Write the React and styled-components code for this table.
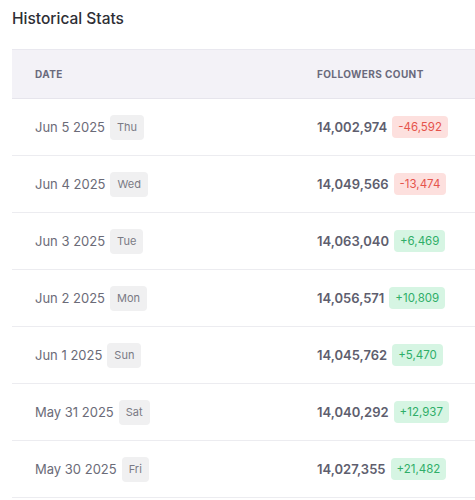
import styled, { createGlobalStyle } from 'styled-components';

const GlobalStyle = createGlobalStyle`
  body {
    margin: 0;
    background: #ffffff;
    font-family: Inter, "Noto Sans", sans-serif;
    overflow: hidden;
  }
`;

const Page = styled.div`
  padding: 8px 0 0 12px;
`;

const Title = styled.h2`
  margin: 0 0 19px;
  font-size: 15.5px;
  line-height: 22px;
  font-weight: 500;
  color: #2e2e35;
`;

const Table = styled.div`
  width: 560px;
`;

const HeaderRow = styled.div`
  display: grid;
  grid-template-columns: 282px 1fr;
  align-items: center;
  height: 48px;
  background: #f3f2f7;
  border-top: 1px solid #e9e8ef;
  border-bottom: 1px solid #e6e5ec;
`;

const HeaderCell = styled.div`
  padding-left: 23px;
  font-size: 10px;
  font-weight: 700;
  letter-spacing: 0.4px;
  text-transform: uppercase;
  color: #6a6a7c;
`;

const Row = styled.div`
  display: grid;
  grid-template-columns: 282px 1fr;
  align-items: center;
  height: 56px;
  border-bottom: 1px solid #ececf0;
`;

const Cell = styled.div`
  display: flex;
  align-items: center;
  gap: 5px;
  padding-left: 23px;
`;

const DateText = styled.span`
  font-size: 13px;
  color: #6b6b78;
`;

const DayTag = styled.span`
  display: inline-flex;
  align-items: center;
  height: 25px;
  padding: 0 7px;
  border-radius: 4px;
  background: #f0f0f1;
  font-size: 11px;
  color: #7a7a84;
`;

const Count = styled.span`
  font-size: 13px;
  font-weight: 600;
  color: #5e5e6e;
`;

const Change = styled.span`
  display: inline-flex;
  align-items: center;
  height: 22px;
  padding: 0 6px;
  border-radius: 4px;
  font-size: 11.5px;
  background: ${({ $up }) => ($up ? '#d6f5e3' : '#fde0de')};
  color: ${({ $up }) => ($up ? '#2fae68' : '#e5534b')};
`;

const stats = [
  { date: 'Jun 5 2025', day: 'Thu', count: '14,002,974', change: '-46,592' },
  { date: 'Jun 4 2025', day: 'Wed', count: '14,049,566', change: '-13,474' },
  { date: 'Jun 3 2025', day: 'Tue', count: '14,063,040', change: '+6,469' },
  { date: 'Jun 2 2025', day: 'Mon', count: '14,056,571', change: '+10,809' },
  { date: 'Jun 1 2025', day: 'Sun', count: '14,045,762', change: '+5,470' },
  { date: 'May 31 2025', day: 'Sat', count: '14,040,292', change: '+12,937' },
  { date: 'May 30 2025', day: 'Fri', count: '14,027,355', change: '+21,482' },
];

const App = () => (
  <Page>
    <GlobalStyle />
    <Title>Historical Stats</Title>
    <Table>
      <HeaderRow>
        <HeaderCell>Date</HeaderCell>
        <HeaderCell>Followers Count</HeaderCell>
      </HeaderRow>
      {stats.map((s) => (
        <Row key={s.date}>
          <Cell>
            <DateText>{s.date}</DateText>
            <DayTag>{s.day}</DayTag>
          </Cell>
          <Cell>
            <Count>{s.count}</Count>
            <Change $up={s.change.startsWith('+')}>{s.change}</Change>
          </Cell>
        </Row>
      ))}
    </Table>
  </Page>
);

export default App;
